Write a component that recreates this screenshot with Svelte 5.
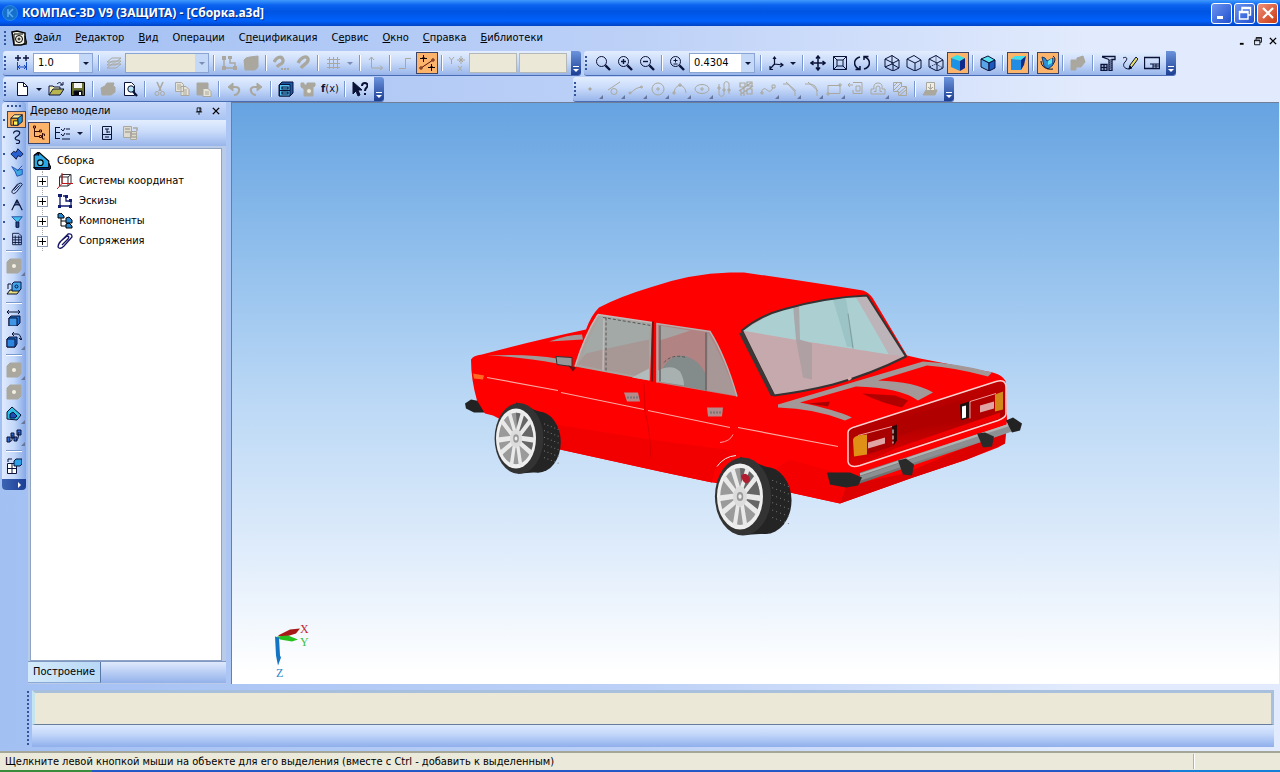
<script lang="ts">
  type Item = {
    kind?: "sep" | "arrow" | "combo" | "field";
    icon?: string;
    label?: string;
    on?: boolean;
    off?: boolean;
    fly?: boolean;
    value?: string;
    size?: "s" | "m" | "l";
  };

  const sep: Item = { kind: "sep" };
  const arrow: Item = { kind: "arrow" };

  const menu = [
    ["", "Ф", "айл"],
    ["", "Р", "едактор"],
    ["", "В", "ид"],
    ["Операции", "", ""],
    ["С", "п", "ецификация"],
    ["С", "е", "рвис"],
    ["", "О", "кно"],
    ["", "С", "правка"],
    ["", "Б", "иблиотеки"],
  ];

  const currentState: Item[] = [
    { icon: "step", label: "Шаг курсора" },
    { kind: "combo", label: "Значение шага", value: "1.0", size: "s" },
    sep,
    { icon: "layers", label: "Слои", off: true },
    { kind: "combo", label: "Слой", value: "", size: "l", off: true },
    sep,
    { icon: "sketch", label: "Эскиз", off: true },
    { icon: "solid", label: "Деталь", off: true },
    sep,
    { icon: "magnetDots", label: "Привязки", off: true },
    { icon: "magnet", label: "Запретить привязки", off: true },
    sep,
    { icon: "grid", label: "Сетка", off: true },
    { ...arrow, off: true },
    sep,
    { icon: "lcs", label: "Локальная СК", off: true },
    sep,
    { icon: "ortho", label: "Ортогональное черчение", off: true },
    { icon: "round", label: "Округление", on: true },
    sep,
    { icon: "yx", label: "Координаты", off: true },
    { kind: "field", label: "Координата X", off: true },
    { kind: "field", label: "Координата Y", off: true },
  ];

  const viewBar: Item[] = [
    { icon: "zoom", label: "Увеличить рамкой" },
    { icon: "zoomIn", label: "Увеличить" },
    { icon: "zoomOut", label: "Уменьшить" },
    sep,
    { icon: "zoomPm", label: "Масштаб" },
    { kind: "combo", label: "Текущий масштаб", value: "0.4304", size: "m" },
    sep,
    { icon: "axes", label: "Ориентация" },
    arrow,
    sep,
    { icon: "pan", label: "Сдвинуть" },
    { icon: "fit", label: "Приблизить" },
    { icon: "rotate", label: "Повернуть" },
    sep,
    { icon: "cubeWire", label: "Каркас" },
    { icon: "cube", label: "Без невидимых линий" },
    { icon: "cubeThin", label: "Невидимые линии тонкие" },
    { icon: "cubeShade", label: "Полутоновое", on: true },
    sep,
    { icon: "cubeEdge", label: "Полутоновое с каркасом" },
    sep,
    { icon: "persp", label: "Перспектива", on: true },
    sep,
    { icon: "simple", label: "Упрощенное отображение", on: true },
    sep,
    { icon: "cut", label: "Скрыть", off: true },
    sep,
    { icon: "rebuild", label: "Перестроить" },
    { icon: "pencil", label: "Редактировать" },
    { icon: "layout", label: "Показать все" },
  ];

  const standard: Item[] = [
    { icon: "doc", label: "Создать" },
    arrow,
    { icon: "open", label: "Открыть" },
    { icon: "save", label: "Сохранить" },
    sep,
    { icon: "print", label: "Печать", off: true },
    { icon: "preview", label: "Предварительный просмотр" },
    sep,
    { icon: "scissors", label: "Вырезать", off: true },
    { icon: "copy", label: "Копировать", off: true },
    { icon: "paste", label: "Вставить", off: true },
    sep,
    { icon: "undo", label: "Отменить", off: true },
    { icon: "redo", label: "Повторить", off: true },
    sep,
    { icon: "library", label: "Менеджер библиотек" },
    { icon: "vars", label: "Переменные", off: true },
    { icon: "fx", label: "Функции" },
    sep,
    { icon: "help", label: "Справка" },
  ];

  const geometry: Item[] = [
    { icon: "gPoint", label: "Точка", off: true, fly: true },
    { icon: "gAux", label: "Вспомогательная прямая", off: true, fly: true },
    { icon: "gLine", label: "Отрезок", off: true, fly: true },
    { icon: "gCircle", label: "Окружность", off: true, fly: true },
    { icon: "gArc", label: "Дуга", off: true, fly: true },
    { icon: "gEllipse", label: "Эллипс", off: true, fly: true },
    { icon: "gChain", label: "Непрерывный ввод", off: true },
    { icon: "gHatch", label: "Линия", off: true },
    { icon: "gSpline", label: "Кривая Безье", off: true, fly: true },
    { icon: "gChamfer", label: "Фаска", off: true, fly: true },
    { icon: "gFillet", label: "Скругление", off: true, fly: true },
    { icon: "gRect", label: "Прямоугольник", off: true, fly: true },
    { icon: "gContour", label: "Собрать контур", off: true },
    { icon: "gOffset", label: "Эквидистанта", off: true, fly: true },
    { icon: "gFill", label: "Штриховка", off: true },
    sep,
    { icon: "gProject", label: "Спроецировать объект", off: true },
  ];

  const modes: Item[] = [
    { icon: "mEdit", label: "Редактирование сборки", on: true },
    { icon: "mCurve", label: "Пространственные кривые" },
    { icon: "mSurface", label: "Поверхности" },
    { icon: "mAux", label: "Вспомогательная геометрия" },
    { icon: "clip", label: "Сопряжения" },
    { icon: "mMeasure", label: "Измерения" },
    { icon: "mFilter", label: "Фильтры" },
    { icon: "mSpec", label: "Элементы спецификации" },
  ];

  const assembly: Item[] = [
    sep,
    { icon: "blob", label: "Операция", off: true, fly: true },
    { icon: "aAdd", label: "Добавить из файла" },
    sep,
    { icon: "aMove", label: "Переместить компонент" },
    { icon: "aTurn", label: "Повернуть компонент", fly: true },
    sep,
    { icon: "blob", label: "Вырезать", off: true, fly: true },
    { icon: "blob", label: "Отверстие", off: true },
    { icon: "aSection", label: "Сечение", fly: true },
    { icon: "aArray", label: "Массив", fly: true },
    sep,
    { icon: "aPart", label: "Создать деталь" },
  ];

  const tree = [
    { icon: "coords", text: "Системы координат" },
    { icon: "sketchBlue", text: "Эскизы" },
    { icon: "parts", text: "Компоненты" },
    { icon: "clipBlue", text: "Сопряжения" },
  ];

  const lens = `<circle cx="6.500" cy="6.500" r="5"/><path d="M10.400 10.400l4.600 4.600" stroke-width="2.400"/>`;
  const hex = `M1 4l7-3.500 7 4.500v8l-6 3-8-4z`;

  // All drawings share a 16x16 box and take the button's colour unless they set their own
  const icons: Record<string, string> = {
    step: `<path d="M4 0v6M1 3h6M12 0v6M9 3h6" stroke-width="1.400"/><path stroke="#1848c0" d="M3.500 15V7M12.500 15V7M4 12h8M6 10l-2 2 2 2M10 10l2 2-2 2"/>`,
    layers: `<path d="M1 10l5-4h9l-5 4zM1 13l5-4h9l-5 4zM1 7l5-4h9l-5 4z"/>`,
    sketch: `<path d="M3 3v10h11V8H9V3" stroke-width="1.500"/><path d="M1 1h4v4H1zM1 11h4v4H1zM12 11h4v4h-4zM7 1h4v3H7z" fill="currentColor" stroke="none"/>`,
    solid: `<path d="M1 5q2-3 6-3l8-1v11q-2 4-6 3H2z" fill="currentColor"/>`,
    blob: `<path d="M1 4l3-3h11v11l-3 3H1z" fill="currentColor"/><circle cx="8" cy="8" r="2" fill="#f2f0e2" stroke="none"/>`,
    magnet: `<path d="M3 8C6 2 12 0 13 4s-4 5-7 9" stroke-width="3.400"/>`,
    magnetDots: `<path d="M1 7c3-6 8-6 9-2s-4 4-6 7" stroke-width="3.200"/><path d="M8 14h8" stroke-width="2" stroke-dasharray="2 1"/>`,
    grid: `<path d="M4.500 2v12M8.500 2v12M12.500 2v12M2 4.500h13M2 8.500h13M2 12.500h13"/>`,
    lcs: `<path d="M4.500 2v11h11M2 5l2.500-3 2.500 3M13 10.500l2.500 2.500L13 15"/>`,
    ortho: `<path d="M2 13.500h6.500v-10H14"/>`,
    round: `<g stroke="#5a1010"><path d="M2 13L14 5"/><path d="M4.500 0v7M1 3.500h7M12.500 9v7M9 12.500h7" stroke="#100"/><path d="M3.500 3.500l1-2 1 2zM11.500 12.500l1-2 1 2z" stroke="#100"/><circle cx="2" cy="13" r="1.200" fill="#fbb469"/><circle cx="14" cy="5" r="1.200" fill="#fbb469"/></g>`,
    yx: `<path d="M0 2l2.500 3L5 2M2.500 5v4M9 11l4 5M13 11l-4 5M12 1v8M8 5h8M10 3l4 4M14 3l-4 4"/>`,
    zoom: lens,
    zoomIn: lens + `<path d="M6.500 4v5M4 6.500h5" stroke-width="1.400"/>`,
    zoomOut: lens + `<path d="M4 6.500h5" stroke-width="1.400"/>`,
    zoomPm: lens + `<path d="M6.500 3.500v4M4.500 5.500h4M4.500 9h4"/>`,
    axes: `<path d="M6.500 9V2M6.500 9l8 1M6.500 9L2 14M5 4l1.500-2L8 4M12.500 8l2.500 2-3 2M2 11v3.500h3" stroke-width="1.200"/>`,
    pan: `<path d="M8 1v14M1 8h14M6 3.500L8 1l2 2.500M6 12.500L8 15l2-2.500M3.500 6L1 8l2.500 2M12.500 6L15 8l-2.500 2" stroke-width="1.500"/>`,
    fit: `<path d="M1.500 1.500h13v13h-13zM5 5h6v6H5zM1.500 1.500L5 5M14.500 1.500L11 5M1.500 14.500L5 11M14.500 14.500L11 11"/>`,
    rotate: `<path d="M6 2C-1 4-1 11 5 14M10 14c7-2 7-9 1-12M1.500 14.500H6V11M14.500 1.500H10V5" stroke-width="1.500"/>`,
    cubeWire: `<path d="${hex}M1 4l8 4 6-3M9 8v8M8 .5V9l-7 3M8 9l7 4"/>`,
    cube: `<path d="${hex}M1 4l8 4 6-3M9 8v8"/>`,
    cubeThin: `<path d="${hex}M1 4l8 4 6-3M9 8v8"/><path stroke-dasharray="1 1" d="M8 .5V9l-7 3M8 9l7 4"/>`,
    cubeShade: `<g stroke="none"><path d="M1 3l6-3 8 3-5 3z" fill="#35e0e8"/><path d="M1 3l9 3v10l-9-4z" fill="#1b92e6"/><path d="M10 6l5-3v10l-5 3z" fill="#102a8c"/></g>`,
    cubeEdge: `<path d="M1 4l7-3 7 4-6 3z" fill="#58e0ee"/><path d="M1 4l8 4v8l-8-4z" fill="#5aa4e8"/><path d="M9 8l6-3v8l-6 3z" fill="#1c58c0"/>`,
    persp: `<g stroke="none"><path d="M1 4l4-3h11l-5 4z" fill="#40dff0"/><path d="M1 4l10 1v10H1z" fill="#208ce4"/><path d="M11 5l5-4-2 9-3 5z" fill="#102a8c"/></g>`,
    simple: `<path d="M2 2l3 1 2 3 6-3v7l-5 4-4-3z" fill="#2c8fd8" stroke="#163a70"/><path d="M1 6c0 6 6 9 12 8M13 1c3 2 2 6 0 8"/><path d="M8 6l4-3v5l-4 2z" fill="#5ae4f0" stroke="none"/>`,
    cut: `<path d="M1 5h5v10H1zM7 3l6-2 2 6-4 5H6z" fill="currentColor"/>`,
    rebuild: `<path d="M2 1.500h13v3h-3v11H9v-11M9 4.500L2 2M1 9.500h6v6H1zM1 12.500h6M4 9.500v6" stroke-width="1.300"/><path d="M10 5v10M11 4v10" stroke-dasharray="1 1"/>`,
    pencil: `<path d="M1 3c4-2 5 1 2 4s-1 7 4 7"/><path d="M7 14l1-4 6-8 2 2-6 8z" fill="#e8e060"/><path d="M7 14l1-3 2 2z" fill="#000"/>`,
    layout: `<path d="M.5 2.500h15v11H.5z" stroke-width="1.300"/><path d="M6 9h9M9 9v4M12 9v4M9 11h6"/>`,
    doc: `<path d="M3.500 1.500h6l4 4v9h-10z" fill="#fff"/><path d="M9.500 1.500v4h4"/>`,
    open: `<path d="M1 14V5h4l1 1h6v3" fill="#f4f0b4"/><path d="M1 14l4-6h11l-4 6z" fill="#b9b650"/><path d="M9 3c2-2 4-2 5 1M12 4h3V1"/>`,
    save: `<path d="M1.500 1.500h13v13h-13z" fill="#6b7230" stroke="#000"/><path d="M4 2h8v5H4z" fill="#f4f4f4" stroke="none"/><path d="M4 10h8v4.500H4z" fill="#000"/><path d="M9 11h2v3H9z" fill="#fff" stroke="none"/>`,
    print: `<path d="M1 7l4-2 2-3h7l-1 3 2 1v5l-4 3H2z" fill="currentColor"/>`,
    preview: `<path d="M2.500 1.500h7l3 3v10h-10z" fill="#fff"/><circle cx="9" cy="8" r="3.200" fill="#b9e4f2"/><path d="M11 10.500l4 4.500" stroke-width="2.200"/>`,
    scissors: `<path d="M5 1l4 9M11 1L7 10" stroke-width="1.500"/><circle cx="5" cy="12.500" r="2"/><circle cx="10.500" cy="12.500" r="2"/>`,
    copy: `<path d="M1.500 1.500h6l2 2v7h-8zM7 5.500h5l3 3v6H7z" fill="#e6e4d6"/><path d="M3 4h4M3 6h4M3 8h3M9 9h4M9 11h4M9 13h4"/>`,
    paste: `<path d="M1 2h11v12H1z" fill="currentColor"/><path d="M7 7.500h5l3 3v5H7z" fill="#e6e4d6"/><path d="M9 11h4M9 13h4"/>`,
    undo: `<path d="M4 6h5q5 0 4 4t-5 4" stroke-width="2.200"/><path d="M7 2v8L2 6z" fill="currentColor"/>`,
    redo: `<path d="M12 6H7q-5 0-4 4t5 4" stroke-width="2.200"/><path d="M9 2v8l5-4z" fill="currentColor"/>`,
    library: `<path d="M1 4l3-3h11v11l-3 3H1z" fill="#1c58a8"/><path d="M1.500 3.500h10.500v11.500H1.500z" fill="#58c4f4"/><path d="M4 6h6v2H4zM4 11h6v2H4zM1.500 9.500H12" stroke-width="1.200"/>`,
    vars: `<path d="M1 2h3v2h3V2h8v3l-2 1v9H4V8L1 6z" fill="currentColor"/><circle cx="9" cy="10" r="2.500" fill="#eceadb"/>`,
    help: `<path d="M1 1v12l3-3 2 5 2-1-2-5h4z" fill="currentColor"/><path d="M10 5c0-4 6-4 5.500 0-.5 2-2.500 2-2.500 5M13 12v2" stroke-width="2"/>`,
    gPoint: `<path d="M5 7h2v2H5z" fill="currentColor"/>`,
    gAux: `<circle cx="8" cy="10.500" r="3"/><path d="M2 9L14 1"/>`,
    gLine: `<path d="M1 12c4 0 4-5 13-6"/><circle cx="2" cy="12" r="1"/><circle cx="13.500" cy="6" r="1"/>`,
    gCircle: `<circle cx="8" cy="8" r="6"/><path d="M6 8h4M8 6v4"/>`,
    gArc: `<path d="M2 12c1-10 11-10 12 0"/><path d="M1 11h2v2H1zM7 3h2v2H7z"/>`,
    gEllipse: `<ellipse cx="8" cy="8" rx="7" ry="4.500"/><path d="M6 8h4M8 6v4"/>`,
    gChain: `<path d="M3 3v10M8 3v10M13 3v10M3 13c0 3 5 3 5 0M8 3c0-3 5-3 5 0"/><path d="M2 6h2v2H2zM7 8h2v2H7zM12 8h2v2h-2z"/>`,
    gHatch: `<path d="M2 2h5v4H2zM9 1h5v4H9zM9 8h5v5H9zM3 15V8M6 15V7M1 10L13 2M3 13L15 5" stroke-width="1.200"/>`,
    gSpline: `<path d="M1 12c4-12 8 6 12-6"/><path d="M1 11h2v2H1zM12 4h3v3h-3z"/>`,
    gChamfer: `<path d="M1 3h5l7 8v4"/><path d="M4 1l10 9"/>`,
    gFillet: `<path d="M1 3h4q8 0 8 8v4"/><path d="M4 1l10 9"/>`,
    gRect: `<path d="M2 4.500h12v8H2z"/><path d="M13 3h2v2h-2zM1 12h2v2H1z"/>`,
    gContour: `<path d="M5 1.500h9v11H5V9M0 4h5M2 2L0 4l2 2M8 10V5h4v5z"/>`,
    gOffset: `<path d="M1 13V8h3q-1-6 4-6t4 6h3v5zM4 10.500h2V7q0-2 2-2t2 2v3.500h2"/>`,
    gFill: `<path d="M1.500 1.500h8v4h5v9h-8v-4h-5z"/><path d="M2 5l3-3M2 9l7-7M5 10l5-5M7 12l7-6M8 14l6-5"/>`,
    gProject: `<path d="M1 14l3-5h11l-2 5z" fill="currentColor"/><path d="M4.500 1.500h8v8h-8zM8.500 3v5M6 6l2.500 2.500L11 6" fill="#f0eee0"/>`,
    mEdit: `<path d="M1 6l4-4h9l-4 4z" fill="#fff09a"/><path d="M1 6h8v8H1z" fill="#f0a820"/><path d="M9 6l5-4v8l-5 4z" fill="#1898d8"/><path d="M4 9h5v5H4z" fill="#fff060"/>`,
    mCurve: `<path d="M4 4c0-4 8-4 7 0s-6 3-5 6 5 0 5 3-3 3-4 2" stroke-width="1.300"/>`,
    mSurface: `<path d="M1 8l3-3 3 1 2-4 6 6-3 3-3-1-2 4z" fill="#2860d0"/>`,
    mAux: `<path d="M2 3l7 4 5-1v6l-6 2-2-5z" fill="#40a8e0" stroke="#1848b0"/><path d="M14 2L8 8" stroke="#1848b0"/>`,
    clip: `<path d="M3 11l7-8q3-2 4 1L7 13q-3 3-5 0 0-2 2-4l5-6M5 11l6-6"/>`,
    mMeasure: `<path d="M8 2L2 14M8 2l6 12M4 9q4-3 8 0M8 4v3" stroke-width="1.300"/>`,
    mFilter: `<path d="M2 2h12l-4 5v7H7V7z" fill="#48c0ec" stroke="#1c48a0"/><path d="M7 8h3v6H7z" fill="#1c48a0"/>`,
    mSpec: `<path d="M3 1.500h7l3 3v10H3zM3 6h10M3 9h10M3 12h10M6 4v10M10 4v10"/>`,
    aAdd: `<path d="M1 14l3-4h10l-3 4z" fill="#e8df78"/><path d="M6 4l2-2h7v7l-2 2H6z" fill="#3fa6ee"/><circle cx="10.500" cy="6.500" r="1.500"/><path d="M2 9V4h3"/>`,
    aMove: `<path d="M3 8l2-2h9v7l-3 3H3z" fill="#186cd0"/><path d="M3 8h8v8H3z" fill="#3f96e6"/><path d="M1 2h13M3 0L1 2l2 2M12 0l2 2-2 2"/>`,
    aTurn: `<path d="M1 7l2-2h8v7l-2 3H1z" fill="#186cd0"/><path d="M1 7h8v8H1z" fill="#2a86e0"/><path d="M6 2h5q4 0 4 6M8 0L6 2l2 2M13 6l2 2 1-2"/>`,
    aSection: `<path d="M1 13V6l5-5 9 8-4 5z" fill="#30c0e4"/><path d="M4 12V8l3-2 4 4-2 2z" fill="#1850b8"/>`,
    aArray: `<path d="M1 9h3v5H1zM5 5h3v5H5zM8 9h3v4H8zM11 2h4v5h-4z" fill="#2a6ad8"/><path d="M4 13c3 1 2-4 2-6M10 12c3 0 2-5 3-8"/>`,
    aPart: `<path d="M1.500 5.500h9v10h-9zM1.500 10.500h9M6 5.500v10" fill="#fff"/><path d="M8 3l2-2h6v5l-2 2H8z" fill="#2aa0e8"/><path d="M2 4V1h4"/>`,
    treeMode: `<path d="M3.500 3v8.500H8M3.500 6.500H8M11.500 8v6M2.500 1h2v2h-2zM8.500 5h2v2h-2zM8.500 10.500h2v2h-2zM11.500 9h2v2M11.500 14h2" stroke="#3a0e00"/>`,
    listMode: `<path d="M1.500 2v12M1.500 2.500H6M1.500 7.500H6M1.500 13.500H6M7 4l2 2 2-3M7 9l2 2 2-3M12 4h4M12 9h4M8 14h8"/>`,
    props: `<path d="M3.500 1.500h9v13h-9zM3.500 9.500h9M6 4h4M8 4v4M8 7h3M6 12h4"/>`,
    relations: `<path d="M1.500 1.500h8v11h-8zM8.500 6.500h6v8h-6z" fill="#dddbcf"/><path d="M3 4h5M3 7h5M10 9h4M10 12h4M11 3h4v3" stroke-width="1.500"/>`,
    root: `<path d="M1 3l4-3 9 8v6H1z" fill="#28a8e4"/><path d="M1 3l4-3v3M14 10l2 4-2 2H3l-2-2h13" fill="#0c2c80"/><circle cx="6.500" cy="9.500" r="2.500" fill="#80dcf4"/>`,
    coords: `<path d="M5 1.500h9v9H5zM2.500 4H11v9H2.500zM2.500 4L5 1.500M11 4l3-2.500M11 13l3-2.500" stroke="#303038"/><path d="M0 16l5-5.500h11M5 10.500V0" stroke="#c01818"/>`,
    sketchBlue: `<path d="M3 3v10h11V8H9V3H6" stroke="#101c70" stroke-width="1.300"/><path d="M1 1h4v3H1zM1 12h3v3H1zM12 12h3v3h-3zM8 2h3v3H8zM12 6h3v3h-3z" fill="#101c70" stroke="none"/>`,
    parts: `<path d="M4 4v9h5M4 8h5"/><path d="M1 1l3-1 3 3v2H1zM9 5l3-1 3 3v3H9zM9 11l3-1 3 3v2H9z" fill="#2888d0"/>`,
    clipBlue: `<path d="M2 10L11 1q4-1 4 3L7 13q-4 4-6 1 0-3 3-6l6-5q3 0 1 3l-6 6" stroke="#141464" stroke-width="1.300"/>`,
    app: `<circle cx="8" cy="8" r="7.500" fill="#1570cc" stroke="#2c88e4"/><path d="M6 4v8M11 4L7 8l4 4" stroke="#58acf4" stroke-width="1.500"/>`,
    asm: `<path d="M1 2l5-1 8 2v11l-4 1H3z" fill="#f4f0e4" stroke-width="1.500"/><circle cx="8" cy="9" r="3.500"/><circle cx="8" cy="9" r="1"/><path d="M3 4h9M3 4v10M14 6l2 8h-4"/>`,
    min: `<path d="M3 12.500h6" stroke-width="3"/>`,
    restore: `<path d="M5 6V2.500h8.500V10H11M2.500 6.500H11V14H2.500zM5 3.500h8.500M2.500 7.500H11" stroke-width="1.400"/>`,
    close: `<path d="M3 3l10 10M13 3L3 13" stroke-width="2.200"/>`,
    pin: `<path d="M5 3h6v6H5zM3 9.500h10M8 10v4M9.500 3v6" stroke-width="1.300"/>`,
  };

  const spokes = Array.from({ length: 5 }, (_, i) => i * 72);
  const studs = Array.from({ length: 30 }, (_, i) => i);
</script>

{#snippet pic(name: string)}
  <svg class="pic" viewBox="0 0 16 16" aria-hidden="true">{@html icons[name]}</svg>
{/snippet}

{#snippet items(list: Item[])}
  {#each list as it}
    {#if it.kind === "sep"}
      <span class="sep"></span>
    {:else if it.kind === "arrow"}
      <button class="arrow" disabled={it.off} aria-label="Список"></button>
    {:else if it.kind === "combo"}
      <span class="combo {it.size}" class:off={it.off}>
        <input value={it.value} aria-label={it.label} disabled={it.off} />
        <button class="arrow" disabled={it.off} aria-label="Раскрыть"></button>
      </span>
    {:else if it.kind === "field"}
      <input class="coord" aria-label={it.label} disabled />
    {:else}
      <button class="tool" class:on={it.on} class:fly={it.fly} disabled={it.off} aria-label={it.label}>
        {#if it.icon === "fx"}<span class="fx"><b>f</b>(x)</span>{:else}{@render pic(it.icon ?? "")}{/if}
      </button>
    {/if}
  {/each}
{/snippet}

{#snippet toolbar(list: Item[], label: string)}
  <div class="toolbar" role="toolbar" aria-label={label}>
    <span class="grip"></span>
    {@render items(list)}
    <button class="cap" aria-label="Параметры панели"></button>
  </div>
{/snippet}

{#snippet wheel(cx: number, cy: number, rx: number, ry: number)}
  <ellipse cx={cx + rx * 1.1} cy={cy + ry * 0.12} rx={rx * 1.14} ry={ry * 1.02} fill="#242424" />
  <path
    d="M{cx} {cy - ry * 1.2}L{cx + rx * 1.2} {cy - ry * 0.88}L{cx + rx * 1.2} {cy + ry * 1.12}L{cx + 4} {cy +
      ry * 1.17}z"
    fill="#242424"
  />
  <ellipse cx={cx + 3} {cy} rx={rx * 1.22} ry={ry * 1.18} fill="#333" />
  {#each studs as s}
    <rect
      x={cx + rx * (1.4 + 0.17 * (s % 5))}
      y={cy - ry * 0.5 + (s * ry * 1.35) / 30}
      width="1"
      height="1"
      fill="#777"
    />
  {/each}
  <g transform="translate({cx} {cy}) scale({rx} {ry})">
    <circle r="1" fill="#efefef" />
    <circle r="0.86" fill="#9a9a9a" />
    <path d="M0 -.86A.86 .86 0 0 1 .7 .5L.1 .1z" fill="#666" />
    {#each spokes as a}
      <g transform="rotate({a})">
        <path d="M-.16 .2L-.32 .88L-.14 .9L-.02 .3L.02 .3L.14 .9L.32 .88L.16 .2z" fill="#e9e9e9" />
      </g>
    {/each}
    <circle r="0.3" fill="#dcdcdc" />
    <circle r="0.14" fill="#9a9a9a" />
    <circle r="0.07" fill="#eee" />
  </g>
{/snippet}

<div class="app">
  <header class="title">
    {@render pic("app")}
    <h1>КОМПАС-3D V9 (ЗАЩИТА) - [Сборка.a3d]</h1>
    <button class="win" aria-label="Свернуть">{@render pic("min")}</button>
    <button class="win" aria-label="Восстановить">{@render pic("restore")}</button>
    <button class="win red" aria-label="Закрыть">{@render pic("close")}</button>
  </header>

  <nav class="menu">
    <span class="grip"></span>
    <span class="asm">{@render pic("asm")}</span>
    {#each menu as [a, key, b]}
      <button>{a}<u>{key}</u>{b}</button>
    {/each}
    <span class="mdi">
      <button aria-label="Свернуть окно">{@render pic("min")}</button>
      <button aria-label="Восстановить окно">{@render pic("restore")}</button>
      <button aria-label="Закрыть окно">{@render pic("close")}</button>
    </span>
  </nav>

  <div class="bars">
    {@render toolbar(currentState, "Текущее состояние")}
    {@render toolbar(viewBar, "Вид")}
  </div>
  <div class="bars">
    <div class="lead">{@render toolbar(standard, "Стандартная")}</div>
    {@render toolbar(geometry, "Геометрия")}
  </div>

  <main>
    <div class="compact" role="toolbar" aria-label="Компактная панель">
      <span class="hgrip"></span>
      <div class="modes">{@render items(modes)}</div>
      {@render items(assembly)}
      <button class="vcap" aria-label="Параметры панели"></button>
    </div>

    <aside class="panel">
      <div class="phead">
        <h2>Дерево модели</h2>
        <button aria-label="Закрепить">{@render pic("pin")}</button>
        <button aria-label="Закрыть панель">{@render pic("close")}</button>
      </div>
      <div class="pbar">
        <button class="tool on" aria-label="Отображение структуры">{@render pic("treeMode")}</button>
        <button class="tool" aria-label="Состав дерева">{@render pic("listMode")}</button>
        <button class="arrow" aria-label="Список"></button>
        <span class="sep"></span>
        <button class="tool" aria-label="Дополнительное окно">{@render pic("props")}</button>
        <button class="tool" disabled aria-label="Отношения">{@render pic("relations")}</button>
      </div>
      <div class="tree">
        <div class="node root">{@render pic("root")}<span>Сборка</span></div>
        <ul>
          {#each tree as n}
            <li class="node">
              <button class="plus" aria-label="Развернуть"></button>
              {@render pic(n.icon)}<span>{n.text}</span>
            </li>
          {/each}
        </ul>
      </div>
      <div class="tabs"><button>Построение</button></div>
    </aside>

    <section class="view">
      <svg viewBox="231 103 1048 581" preserveAspectRatio="xMidYMid meet" role="img" aria-label="Модель">
        <defs>
          <linearGradient id="chrome" x1="0" y1="0" x2="0.2" y2="1">
            <stop offset="0" stop-color="#aaa" />
            <stop offset="1" stop-color="#686868" />
          </linearGradient>
          <linearGradient id="tail" x1="0" y1="0" x2="0.25" y2="1">
            <stop offset="0" stop-color="#c80000" />
            <stop offset="0.6" stop-color="#b00000" />
            <stop offset="1" stop-color="#e80000" />
          </linearGradient>
          <clipPath id="backGlass">
            <path d="M742 331Q760 316 783 310Q824 298 867 296L906 357Q870 375 833 385Q805 392 774 396z" />
          </clipPath>
        </defs>

        <!-- far bumper end, body -->
        <path d="M465 404L471 400L487 403L486 413L474 413L466 409z" fill="#222" />
        <path
          d="M471 360Q473 356 482 355Q530 342 586 330Q591 316 599 308Q620 297 650 288Q690 274 730 273L744 273Q800 281 863 291Q869 293 873 299L907 356L920 359L987 372Q1003 374 1006 383L1007 420L1005 444L998 448L967 460L913 478L840 504L790 493L712 483L660 472L560 450L493 416L485 414L477 401Q471 380 471 360z"
          fill="#fe0000"
        />
        <path d="M555 425L650 440L740 452L715 470L712 483L660 472L560 450L548 432z" fill="#f20000" />
        <path d="M790 460L846 476L840 504L790 493L775 470z" fill="#f40000" />
        <path d="M840 504L846 486L905 474L1006 430L1005 444L967 460L913 478z" fill="#dc0000" />

        <!-- hood stripes and mirror -->
        <path d="M487 356Q530 354 557 359L557 364Q520 357 487 356z" fill="#a29a9a" />
        <path d="M549 342Q568 335 582 335L583 340Q565 341 549 342z" fill="#a29a9a" />

        <!-- side windows -->
        <path d="M598 315L652 323L650 381L575 367Q585 335 598 315z" fill="#a9a3a0" />
        <path d="M600 317L650 325L649 343Q612 351 583 356Q590 334 600 317z" fill="#a2a9a7" />
        <path d="M586 354Q620 346 649 340L649 379L577 365z" fill="#a79896" />
        <path d="M632 378L649 369V381z" fill="#b3bcbc" />
        <path d="M598 315L652 323M598 315Q585 335 575 367M604 317L603 371" stroke="#c2bab8" stroke-width="1.500" fill="none" />
        <path d="M603 318L651 326M606 318V371" stroke="#555" stroke-width="1" stroke-dasharray="3 2" fill="none" />
        <path d="M653 322L652 382" stroke="#7c1010" stroke-width="2" />
        <path d="M657 324L710 332Q725 356 737 397L657 383z" fill="#b28383" />
        <path d="M659 326L690 331Q670 338 659 341z" fill="#a6a4a2" />
        <path d="M663 368Q670 356 683 356Q700 360 706 376V391L664 383z" fill="#838b8b" />
        <path d="M658 371Q672 364 680 372Q684 379 684 386L658 382z" fill="#a9b0b0" />
        <path d="M664 363Q672 354 686 358" stroke="#555" fill="none" stroke-dasharray="3 2" />
        <path d="M708 333Q723 358 736 396L707 391z" fill="#a89797" />
        <path d="M657 383V324L710 332Q725 356 737 397" stroke="#b8b0ae" stroke-width="1.500" fill="none" />
        <path d="M706 333V391M660 326V382" stroke="#666" stroke-width="1.500" />
        <path d="M556 357L572 358V367L557 365z" fill="#979797" stroke="#333" />
        <path d="M568 366L576 368L573 372z" fill="#611" />

        <!-- trim, handles, blinker -->
        <path d="M487 378L558 391M561 393L644 410M648 411L730 428M738 428L838 447" stroke="#ffa8a0" stroke-width="1.200" />
        <path d="M644 384L645 412Q650 430 651 459" stroke="#dc0000" fill="none" />
        <path d="M720 443Q730 442 733 435" stroke="#ffa0a0" fill="none" />
        <path d="M624 393h14l2 9h-13zM707 408h16l-1 9h-14z" fill="#b48a8a" />
        <path d="M627 398h11M710 413h11" stroke="#777" stroke-width="2" stroke-dasharray="2 1" />
        <path d="M473 374L484 376L483 380L474 379z" fill="#ff6a20" />

        <!-- back glass -->
        <g clip-path="url(#backGlass)">
          <path d="M740 290h170v110H740z" fill="#c6a9ad" />
          <path d="M742 331L783 308L857 296L889 355L800 341z" fill="#acd0d2" />
          <path d="M855 296L868 296L907 357L889 355z" fill="#bcb4b8" />
          <path d="M793 306L799 304L800 340L812 344L812 380L803 378L796 340z" fill="#a99da1" opacity="0.800" />
          <path d="M833 300L846 299L854 348L847 347z" fill="#9cc3c5" />
          <path d="M848 314L853 349" stroke="#7f9c9e" />
        </g>
        <path
          d="M742 331Q760 316 783 310Q824 298 867 296L906 357Q870 375 833 385Q805 392 774 396z"
          fill="none"
          stroke="#343232"
          stroke-width="2"
          stroke-linejoin="round"
        />
        <path d="M741 333L773 396" stroke="#3b3737" stroke-width="4" />
        <path d="M848 380L851 378" stroke="#d8b0b0" stroke-width="3" />

        <!-- boot lid -->
        <path
          d="M778 405L923 362Q960 364 992 373L988 377Q955 368 927 366L878 381Q915 382 933 393L918 401Q900 388 856 387L800 403Q835 410 852 418L845 421Q815 409 778 408z"
          fill="#a39797"
        />
        <path d="M862 394L895 396L908 401L902 408Q880 403 862 394z" fill="#b00000" />
        <path d="M808 404L830 402L828 407z" fill="#a80000" />

        <!-- tail panel -->
        <path d="M848 433Q848 429 856 427L996 382Q1006 379 1006 388V414Q1006 418 998 421L860 466Q849 469 848 462z" fill="url(#tail)" />
        <path d="M900 420L962 400V412L900 436z" fill="#b00000" />
        <path d="M895 449L1000 413L1000 419L870 461z" fill="#f00000" />
        <path
          d="M848 433Q848 429 856 427L996 382Q1006 379 1006 388V414Q1006 418 998 421L860 466Q849 469 848 462z"
          fill="none"
          stroke="#ffd0d0"
          stroke-width="1.500"
        />
        <path d="M854 437L892 427V447L867 455" fill="#a80000" />
        <path d="M858 436L892 427" stroke="#f0a0a0" />
        <path d="M853 440Q854 437 858 436L867 435V455L854 457z" fill="#e09014" />
        <path d="M868 443L885 438V444L868 449z" fill="#e0a4a4" />
        <path d="M892 427L897 425V441L893 447z" fill="#2a0808" />
        <path d="M893 430V444" stroke="#fff" stroke-dasharray="4 2" />
        <path d="M970 402L996 394V412L970 420z" fill="#b00000" />
        <path d="M970 419V402L996 394" fill="none" stroke="#f0a0a0" />
        <path d="M980 406L994 402V409L980 413z" fill="#e0a4a4" />
        <path d="M995 395L1003 392V410L995 412z" fill="#d48a18" />
        <path d="M960 405L969 402V418L961 421z" fill="#1c1010" />
        <path d="M962 407L966 406V418L962 419z" fill="#fff" />

        <!-- rear bumper -->
        <path d="M860 473L1013 423L1015 431L860 484z" fill="url(#chrome)" />
        <path d="M860 475L1010 425" stroke="#b4b4b4" stroke-width="2" />
        <path d="M860 479L1010 429" stroke="#8c9092" stroke-width="4" />
        <path d="M827 473L850 473L862 478L858 486L846 488L830 485z" fill="#262626" />
        <path d="M898 461L906 459L914 465L912 476L903 475z" fill="#2a2a2a" />
        <path d="M977 434L985 433L994 437L992 447L983 448z" fill="#2a2a2a" />
        <path d="M1006 421L1013 418L1022 424L1020 431L1012 433z" fill="#222" />

        <!-- wheels -->
        {@render wheel(516, 439, 20, 30)}
        {@render wheel(740, 497, 23, 33)}
        <path d="M741 476q5-4 8 1t-3 7q-4-2-5-8z" fill="#b01c30" />
        <path d="M717 467Q724 457 736 456" stroke="#eee" fill="none" />

        <!-- axis triad -->
        <g class="triad">
          <path d="M278 636L290 630L300 629L296 634L283 638z" fill="#a81818" />
          <path d="M277 637L288 636L298 640L292 642L280 640z" fill="#28c020" />
          <path d="M275 637L279 638L280 656L281 658L278 666L276 656z" fill="#1474c4" />
          <text x="300" y="633" fill="#c02838">X</text>
          <text x="300" y="646" fill="#40c040">Y</text>
          <text x="276" y="677" fill="#3088c8">Z</text>
        </g>
      </svg>
    </section>
  </main>

  <footer>
    <div class="props">
      <span class="grip"></span>
      <div class="pbox">
        <div class="pfield"></div>
        <div class="pstrip"></div>
      </div>
    </div>
    <div class="status">
      <p>Щелкните левой кнопкой мыши на объекте для его выделения (вместе с Ctrl - добавить к выделенным)</p>
      <span></span>
    </div>
    <div class="task"></div>
  </footer>
</div>

<style>
  :global(body) {
    background: #9ebef5;
  }
  .app {
    --ink: #0a1238;
    --face: linear-gradient(#e3edfe, #c9dbfa 45%, #98b5ea);
    --cap: linear-gradient(#6c94dc, #1c3f94);
    display: flex;
    flex-direction: column;
    min-height: 100vh;
    overflow: hidden;
    background: linear-gradient(90deg, #a3c0f3, #bdd1f7 50%, #e2ebfd 85%);
    color: #000;
    font-family: "DejaVu Sans Condensed", Tahoma, "Noto Sans", sans-serif;
    font-size: 11px;
    line-height: 16px;
  }
  button,
  input {
    margin: 0;
    padding: 0;
    border: 0;
    background: none;
    color: inherit;
    font: inherit;
  }
  h1,
  h2,
  p,
  ul {
    margin: 0;
    padding: 0;
    font: inherit;
    list-style: none;
  }
  .pic {
    display: block;
    flex: none;
    width: 16px;
    height: 16px;
    fill: none;
    stroke: currentColor;
  }

  /* title and menu */
  .title {
    display: flex;
    align-items: center;
    gap: 2px;
    height: 26px;
    padding: 0 2px;
    box-sizing: border-box;
    background: linear-gradient(#3f9afe, #0a62ee 20%, #0054e3 45%, #0061fb 80%, #0043c4);
    color: #fff;
  }
  .title h1 {
    flex: 1;
    padding-left: 2px;
    font-family: "Noto Sans", "Trebuchet MS", sans-serif;
    font-size: 12px;
    font-weight: 700;
    text-shadow: 1px 1px #0a2a80;
  }
  .win {
    display: grid;
    place-items: center;
    width: 21px;
    height: 21px;
    border: 1px solid #fff;
    border-radius: 3px;
    background: linear-gradient(135deg, #6c94f0, #2050d0);
  }
  .win.red {
    background: linear-gradient(135deg, #f09078, #c83810);
  }
  .menu {
    display: flex;
    align-items: center;
    height: 24px;
    padding: 0 2px 0 3px;
  }
  .menu > button {
    padding: 0 7px;
  }
  .asm {
    width: 16px;
  }
  .mdi {
    display: flex;
    gap: 5px;
    margin-left: auto;
    padding-top: 6px;
  }
  .mdi .pic,
  .phead .pic {
    width: 10px;
    height: 10px;
    stroke-width: 2;
  }

  /* toolbars */
  .bars {
    display: flex;
    gap: 3px;
    padding: 1px 0 0 3px;
  }
  .lead {
    display: flex;
    width: 567px;
  }
  .toolbar {
    display: flex;
    align-items: center;
    height: 25px;
    border-bottom: 1px solid #4a6cb4;
    border-radius: 3px;
    box-sizing: border-box;
    background: var(--face);
    color: var(--ink);
  }
  .grip {
    flex: none;
    width: 8px;
    height: 16px;
    background: radial-gradient(circle at 2px 2px, #34559c 1px, transparent 1px) 0 0 / 8px 4px;
  }
  .tool {
    position: relative;
    display: grid;
    place-items: center;
    flex: none;
    width: 22px;
    height: 22px;
    box-sizing: border-box;
  }
  .tool.on {
    border: 1px solid #3c4468;
    background: #fbb469;
  }
  .tool:disabled {
    color: #aaa89e;
  }
  .tool.fly::after {
    content: "";
    position: absolute;
    right: 0;
    bottom: 1px;
    border: 2px solid transparent;
    border-right-color: #66759a;
    border-bottom-color: #66759a;
  }
  .sep {
    flex: none;
    width: 8px;
    height: 16px;
    background: linear-gradient(90deg, transparent 3px, #7a98d0 3px 4px, #fff 4px 5px, transparent 5px);
  }
  .arrow {
    flex: none;
    display: grid;
    place-items: center;
    width: 12px;
    height: 20px;
  }
  .arrow::after {
    content: "";
    border: 3px solid transparent;
    border-top-color: #101838;
    border-bottom: 0;
  }
  .arrow:disabled::after {
    border-top-color: #7c8cb4;
  }
  .combo {
    display: flex;
    flex: none;
    height: 20px;
    margin-right: 2px;
    box-sizing: border-box;
    border: 1px solid #8aa4d4;
    background: #fff;
  }
  .combo.s {
    width: 60px;
  }
  .combo.m {
    width: 66px;
    margin-left: 1px;
  }
  .combo.l {
    width: 84px;
    margin-right: 1px;
  }
  .combo input {
    flex: 1;
    min-width: 0;
    padding-left: 4px;
    color: #000;
  }
  .combo .arrow {
    height: 18px;
    width: 13px;
    background: #c4d8f8;
  }
  .combo.off {
    background: #ebe8d8;
  }
  .coord {
    width: 48px;
    height: 20px;
    margin-left: 1px;
    margin-right: 1px;
    box-sizing: border-box;
    border: 1px solid #b4b8b8;
    background: #ebe8d8;
  }
  .cap {
    position: relative;
    align-self: stretch;
    width: 10px;
    margin-left: 3px;
    border-radius: 0 3px 3px 0;
    background: var(--cap);
  }
  .cap::before,
  .cap::after {
    content: "";
    position: absolute;
    left: 2px;
    bottom: 3px;
    width: 0;
    border: 3px solid transparent;
    border-top-color: #fff;
    border-bottom: 0;
  }
  .cap::before {
    bottom: 8px;
    width: 6px;
    border: 0;
    border-top: 1px solid #fff;
  }

  /* work area */
  main {
    display: flex;
    flex: 1;
  }
  .compact {
    display: flex;
    flex-direction: column;
    align-items: center;
    align-self: flex-start;
    width: 24px;
    margin: 0 2px;
    border-radius: 4px;
    background: linear-gradient(90deg, #dfeafe, #c4d8fa 50%, #86a8e6);
    color: var(--ink);
  }
  .compact .sep {
    width: 16px;
    height: 8px;
    background: linear-gradient(transparent 3px, #7a98d0 3px 4px, #fff 4px 5px, transparent 5px);
  }
  .hgrip {
    width: 16px;
    height: 9px;
    background: radial-gradient(circle at 2px 4px, #34559c 1px, transparent 1px) 0 0 / 4px 9px;
  }
  .modes {
    display: flex;
    flex-direction: column;
    align-items: flex-end;
    align-self: stretch;
    background: radial-gradient(circle at 2px 3px, #34559c 1px, transparent 1px) 0 6px / 24px 17px repeat-y;
  }
  .modes .tool {
    width: 19px;
    height: 17px;
  }
  .modes .pic {
    width: 14px;
    height: 14px;
  }
  .vcap {
    align-self: stretch;
    height: 11px;
    margin-top: 2px;
    border-radius: 0 0 4px 4px;
    background: linear-gradient(90deg, #3c64b4, #1c3f94);
  }
  .vcap::after {
    content: "";
    display: block;
    width: 0;
    margin-left: 16px;
    border: 3px solid transparent;
    border-left-color: #fff;
    border-right: 0;
  }
  .panel {
    display: flex;
    flex-direction: column;
    flex: none;
    width: 198px;
    margin-right: 5px;
    background: #b9cbe6;
  }
  .phead {
    display: flex;
    align-items: center;
    gap: 7px;
    height: 18px;
    padding: 0 5px 0 2px;
    background: linear-gradient(#c9dafa, #a9c3f2);
  }
  .phead h2 {
    flex: 1;
  }
  .pbar {
    display: flex;
    align-items: center;
    gap: 1px;
    height: 26px;
    background: var(--face);
    color: var(--ink);
  }
  .tree {
    flex: 1;
    margin: 2px 4px 0 2px;
    padding: 2px;
    border: 1px solid #8fa4c4;
    background: #fff;
  }
  .node {
    display: flex;
    align-items: center;
    height: 20px;
    gap: 6px;
    white-space: nowrap;
  }
  .root .pic {
    width: 18px;
    height: 18px;
  }
  ul {
    margin-left: 9px;
    border-left: 1px dotted #a8a8a8;
  }
  li .pic {
    margin-left: 3px;
  }
  .plus {
    flex: none;
    width: 11px;
    height: 11px;
    margin-left: -6px;
    border: 1px solid #8c9cb0;
    box-sizing: border-box;
    background:
      linear-gradient(#000, #000) center / 7px 1px no-repeat,
      linear-gradient(#000, #000) center / 1px 7px no-repeat,
      #fff;
  }
  .tabs {
    height: 22px;
    background: linear-gradient(#dfe9fd, #92b1ea);
    border-top: 1px solid #7f98c4;
    margin-bottom: 1px;
    box-sizing: border-box;
  }
  .tabs button {
    height: 21px;
    padding: 0 5px;
    border-right: 1px solid #5878a8;
    border-bottom: 1px solid #8aa8d8;
    background: linear-gradient(90deg, #d4eafa, #b8d8f6);
  }
  .view {
    display: flex;
    flex: 1;
    min-width: 0;
    margin-right: 1px;
    box-shadow: inset 1px 1px #6f7f98;
    background: linear-gradient(#66a3e1, #8fbeec 25%, #b9d7f5 50%, #dfecfb 77%, #fff 98%);
  }
  .view svg {
    width: 100%;
    height: auto;
  }
  .triad text {
    font-family: "Liberation Serif", serif;
    font-size: 12px;
  }

  /* bottom */
  .props {
    display: flex;
    height: 67px;
    padding: 6px 6px 3px 26px;
    box-sizing: border-box;
  }
  .props .grip {
    width: 6px;
    height: 56px;
  }
  .pbox {
    flex: 1;
  }
  .pfield {
    height: 35px;
    box-sizing: border-box;
    border: 3px solid #a9c0dc;
    border-left-color: #c4e4f0;
    border-bottom: 1px solid #687c9c;
    background: #ebe8d8;
  }
  .pstrip {
    height: 22px;
    background: linear-gradient(#dde9fe, #c4d8fa 40%, #8fafec);
  }
  .status {
    display: flex;
    align-items: center;
    height: 17px;
    border-top: 2px solid #a4a698;
    background: #ebe9d9;
  }
  .status p {
    flex: 1;
    padding-left: 5px;
  }
  .status span {
    width: 86px;
    height: 15px;
    border-left: 1px solid #b4b29c;
    box-shadow: inset 1px 0 #fff;
  }
  .task {
    height: 2px;
    background: linear-gradient(90deg, #3c8a3c 92px, #2458c8 92px 1170px, #1480d8 1170px);
  }
</style>
